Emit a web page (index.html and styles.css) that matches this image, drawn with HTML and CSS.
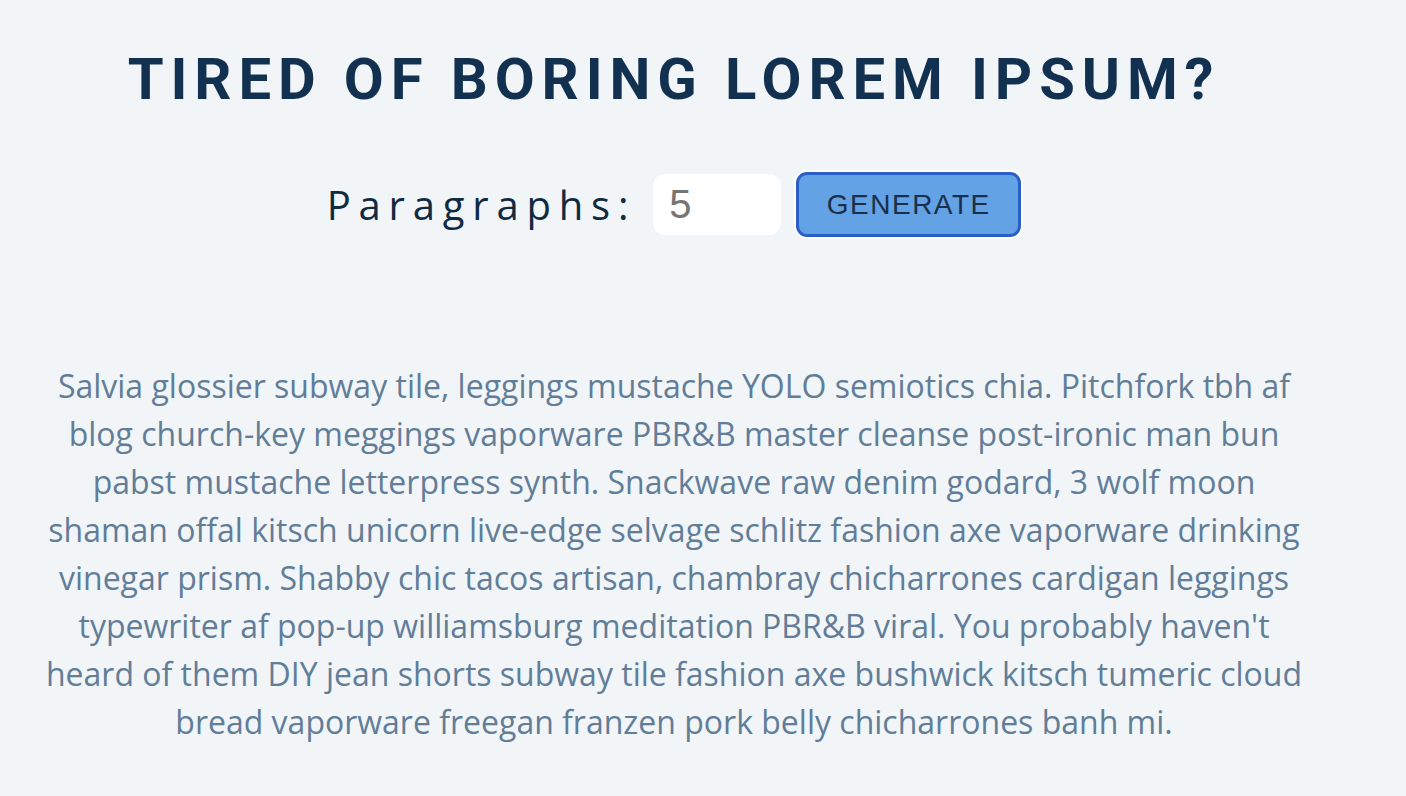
FILE: index.html
```html
<!DOCTYPE html>
<html lang="en">
<head>
<meta charset="utf-8">
<title>Lorem Ipsum Generator</title>
<link rel="stylesheet" href="styles.css">
</head>
<body>
<section class="section-center">
  <h1 class="title">tired of boring lorem ipsum?</h1>
  <form class="lorem-form">
    <label class="form-label" for="amount">paragraphs:</label>
    <input class="form-input" type="number" id="amount" name="amount" value="5">
    <button class="btn" type="submit">generate</button>
  </form>
  <article class="lorem-text">
    <p>Salvia glossier subway tile, leggings mustache YOLO semiotics chia. Pitchfork tbh af blog church-key meggings vaporware PBR&amp;B master cleanse post-ironic man bun pabst mustache letterpress synth. Snackwave raw denim godard, 3 wolf moon shaman offal kitsch unicorn live-edge selvage schlitz fashion axe vaporware drinking vinegar prism. Shabby chic tacos artisan, chambray chicharrones cardigan leggings typewriter af pop-up williamsburg meditation PBR&amp;B viral. You probably haven't heard of them DIY jean shorts subway tile fashion axe bushwick kitsch tumeric cloud bread vaporware freegan franzen pork belly chicharrones banh mi.</p>
  </article>
</section>
</body>
</html>
```

FILE: styles.css
```css
html, body {
  margin: 0;
  padding: 0;
}
body {
  background: #f1f5f8;
  font-family: "Open Sans", "Liberation Sans", sans-serif;
  color: #102a42;
  height: 796px;
  overflow: hidden;
}
.section-center {
  width: 1266px;
  margin-left: 41px;
  padding-top: 44px;
  text-align: center;
}
.title {
  margin: 0;
  font-family: Roboto, "Liberation Sans", sans-serif;
  font-weight: 700;
  font-size: 58px;
  line-height: 70px;
  letter-spacing: 6.9px;
  text-transform: uppercase;
  color: #12304f;
}
.lorem-form {
  display: flex;
  justify-content: center;
  align-items: center;
  margin-top: 58px;
}
.form-label {
  font-family: "Open Sans", sans-serif;
  font-size: 40px;
  letter-spacing: 7.8px;
  text-transform: capitalize;
  color: #102a42;
  margin-right: 17px;
}
.form-input {
  width: 128px;
  height: 61px;
  box-sizing: border-box;
  border: none;
  border-radius: 12px;
  background: #fff;
  padding: 0 16px;
  font-family: "Liberation Sans", Arial, sans-serif;
  font-size: 40px;
  color: #757575;
  outline: none;
  -moz-appearance: textfield;
}
.form-input::-webkit-inner-spin-button,
.form-input::-webkit-outer-spin-button {
  -webkit-appearance: none;
  margin: 0;
}
.btn {
  margin-left: 15px;
  width: 225px;
  height: 65px;
  box-sizing: border-box;
  background: #63a2e4;
  border: 3px solid #2b5ec6;
  border-radius: 11px;
  box-shadow: 0 0 0 2px #ffffff;
  font-family: "Liberation Sans", Arial, sans-serif;
  font-size: 28px;
  letter-spacing: 1.5px;
  text-transform: uppercase;
  color: #1b2f4b;
  cursor: pointer;
}
.lorem-text {
  margin-top: 125px;
}
.lorem-text p {
  margin: 0;
  font-size: 32px;
  line-height: 48px;
  color: #617d98;
}
```
